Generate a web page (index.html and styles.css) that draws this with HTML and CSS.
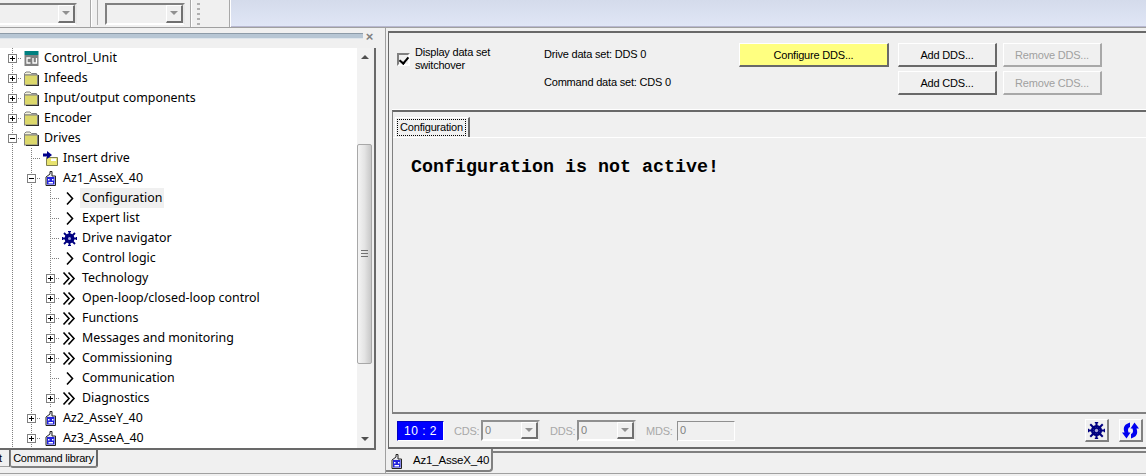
FILE: index.html
```html
<!DOCTYPE html>
<html lang="en">
<head>
    <meta charset="UTF-8">
    <title>Drive configuration</title>
    <link rel="stylesheet" href="styles.css">
</head>
<body>
    <svg class="icon-defs" width="0" height="0">
        <symbol id="i-folder" viewBox="0 0 15 15">
            <path d="M0.5 4 V2.5 L2 1 H6 L7.5 2.5 H12.5 V4 Z" fill="#f4f4dc" stroke="#808080"/>
            <rect x="0.5" y="4" width="13" height="10" fill="#dcd86c" stroke="#808080"/>
            <path d="M14 4 H15 V15 H2 V14 H14 Z" fill="#303030"/>
        </symbol>
        <symbol id="i-cu" viewBox="0 0 15 15">
            <rect x="0.5" y="0" width="14" height="4" fill="#008080"/>
            <rect x="0.5" y="4" width="14" height="11" fill="#808080"/>
            <path d="M6.5 7 H3 V12 H6.5 M9 7 V12 H12.5 V7" fill="none" stroke="#fff" stroke-width="1.3"/>
        </symbol>
        <symbol id="i-insert" viewBox="0 0 15 15">
            <path d="M3.5 6.5 H14.5 V14.5 H3.5 Z" fill="#e8e36e" stroke="#808050"/>
            <path d="M8 7.5 H13 V10 H8 Z" fill="#fff"/>
            <path d="M0 2.5 H4 V0 L9 4 L4 8 V5.5 H0 Z" fill="#00008b"/>
        </symbol>
        <symbol id="i-drive" viewBox="0 0 15 15">
            <path d="M3 14.5 V6 L7 3 V0.5 H9 V5 H12.5 V14.5 Z" fill="#e8e8f0" stroke="#222"/>
            <rect x="4" y="6" width="7.5" height="7.5" fill="#2222dd"/>
            <path d="M5 8 H6.5 V9.5 H5 Z M9 8 H10.5 V9.5 H9 Z M5.5 11 H10 V12.5 H5.5 Z" fill="#fff"/>
        </symbol>
        <symbol id="i-one" viewBox="0 0 15 15">
            <path d="M5 1.5 L10.5 7.5 L5 13.5" fill="none" stroke="#000" stroke-width="1.6"/>
        </symbol>
        <symbol id="i-two" viewBox="0 0 15 15">
            <path d="M1.5 1.5 L7 7.5 L1.5 13.5 M6.5 1.5 L12 7.5 L6.5 13.5" fill="none" stroke="#000" stroke-width="1.6"/>
        </symbol>
        <symbol id="i-gear" viewBox="0 0 15 15">
            <g stroke="#000080" fill="none">
                <circle cx="7.5" cy="7.5" r="3.8" stroke-width="2.2"/>
                <path d="M7.5 0 V15 M0 7.5 H15 M2 2 L13 13 M13 2 L2 13" stroke-width="1.8"/>
            </g>
            <path d="M6 0.5 H9 M6 14.5 H9 M0.5 6 V9 M14.5 6 V9" stroke="#000080"/>
            <circle cx="7.5" cy="7.5" r="1.5" fill="#a8a8d8"/>
        </symbol>
        <symbol id="i-sync" viewBox="0 0 17 17">
            <path d="M8 0.5 C3 2 0.5 5 2.5 10.5 L0 10.5 L4.5 16.5 L8.5 10.5 L6.5 10.5 C5.5 7.5 6 6 8 5 Z" fill="#0000f0"/>
            <path d="M9 16.5 C14 15 16.5 12 14.5 6.5 L17 6.5 L12.5 0.5 L8.5 6.5 L10.5 6.5 C11.5 9.5 11 11 9 12 Z" fill="#0000f0"/>
        </symbol>
    </svg>

    <div class="toolbar">
        <div class="combo combo-first"><span class="combo-arrow"></span></div>
        <div class="tool-sep"></div>
        <div class="tool-edge"></div>
        <div class="combo combo-second"><span class="combo-arrow"></span></div>
        <div class="tool-sep tool-sep-two"></div>
        <div class="grip"></div>
        <div class="tool-sep tool-sep-three"></div>
        <div class="toolbar-fill"></div>
    </div>

    <div class="workspace">
        <div class="left-pane">
            <div class="pane-title">
                <div class="pane-stripe"></div>
                <span class="pane-close">&#215;</span>
            </div>
            <div class="tree-box">
                <div class="tree">
                    <div class="row"><span class="tee"><i class="plus"></i></span><svg class="ico"><use href="#i-cu"/></svg><span class="label">Control_Unit</span></div>
                    <div class="row"><span class="tee"><i class="plus"></i></span><svg class="ico"><use href="#i-folder"/></svg><span class="label">Infeeds</span></div>
                    <div class="row"><span class="tee"><i class="plus"></i></span><svg class="ico"><use href="#i-folder"/></svg><span class="label">Input/output components</span></div>
                    <div class="row"><span class="tee"><i class="plus"></i></span><svg class="ico"><use href="#i-folder"/></svg><span class="label">Encoder</span></div>
                    <div class="row"><span class="tee"><i class="minus"></i></span><svg class="ico"><use href="#i-folder"/></svg><span class="label">Drives</span></div>
                    <div class="row"><span class="guide"></span><span class="tee"></span><svg class="ico"><use href="#i-insert"/></svg><span class="label">Insert drive</span></div>
                    <div class="row"><span class="guide"></span><span class="tee"><i class="minus"></i></span><svg class="ico"><use href="#i-drive"/></svg><span class="label">Az1_AsseX_40</span></div>
                    <div class="row"><span class="guide"></span><span class="guide"></span><span class="tee"></span><svg class="ico"><use href="#i-one"/></svg><span class="label selected">Configuration</span></div>
                    <div class="row"><span class="guide"></span><span class="guide"></span><span class="tee"></span><svg class="ico"><use href="#i-one"/></svg><span class="label">Expert list</span></div>
                    <div class="row"><span class="guide"></span><span class="guide"></span><span class="tee"></span><svg class="ico"><use href="#i-gear"/></svg><span class="label">Drive navigator</span></div>
                    <div class="row"><span class="guide"></span><span class="guide"></span><span class="tee"></span><svg class="ico"><use href="#i-one"/></svg><span class="label">Control logic</span></div>
                    <div class="row"><span class="guide"></span><span class="guide"></span><span class="tee"><i class="plus"></i></span><svg class="ico"><use href="#i-two"/></svg><span class="label">Technology</span></div>
                    <div class="row"><span class="guide"></span><span class="guide"></span><span class="tee"><i class="plus"></i></span><svg class="ico"><use href="#i-two"/></svg><span class="label">Open-loop/closed-loop control</span></div>
                    <div class="row"><span class="guide"></span><span class="guide"></span><span class="tee"><i class="plus"></i></span><svg class="ico"><use href="#i-two"/></svg><span class="label">Functions</span></div>
                    <div class="row"><span class="guide"></span><span class="guide"></span><span class="tee"><i class="plus"></i></span><svg class="ico"><use href="#i-two"/></svg><span class="label">Messages and monitoring</span></div>
                    <div class="row"><span class="guide"></span><span class="guide"></span><span class="tee"><i class="plus"></i></span><svg class="ico"><use href="#i-two"/></svg><span class="label">Commissioning</span></div>
                    <div class="row"><span class="guide"></span><span class="guide"></span><span class="tee"></span><svg class="ico"><use href="#i-one"/></svg><span class="label">Communication</span></div>
                    <div class="row"><span class="guide"></span><span class="guide"></span><span class="tee"><i class="plus"></i></span><svg class="ico"><use href="#i-two"/></svg><span class="label">Diagnostics</span></div>
                    <div class="row"><span class="guide"></span><span class="tee"><i class="plus"></i></span><svg class="ico"><use href="#i-drive"/></svg><span class="label">Az2_AsseY_40</span></div>
                    <div class="row"><span class="guide"></span><span class="tee"><i class="plus"></i></span><svg class="ico"><use href="#i-drive"/></svg><span class="label">Az3_AsseA_40</span></div>
                </div>
                <div class="scrollbar">
                    <span class="scroll-up"></span>
                    <div class="scroll-thumb"><span class="thumb-grip"></span></div>
                    <span class="scroll-down"></span>
                </div>
            </div>
            <div class="left-tabs">
                <div class="left-tab-cut"></div>
                <div class="left-tab">Command library</div>
            </div>
        </div>

        <div class="right-pane">
            <div class="right-box">
                <div class="dds-bar">
                    <div class="dds-check">
                        <span class="checkbox"></span>
                        <span class="check-text">Display data set switchover</span>
                    </div>
                    <div class="dds-line">Drive data set: DDS 0</div>
                    <button class="btn btn-yellow">Configure DDS...</button>
                    <button class="btn btn-add">Add DDS...</button>
                    <button class="btn btn-remove" disabled>Remove DDS...</button>
                    <div class="dds-line dds-line-two">Command data set: CDS 0</div>
                    <button class="btn btn-add btn-row-two">Add CDS...</button>
                    <button class="btn btn-remove btn-row-two" disabled>Remove CDS...</button>
                </div>
                <div class="config-area">
                    <div class="config-tabs"><div class="config-tab"><span class="config-focus">Configuration</span></div></div>
                    <div class="config-body">Configuration is not active!</div>
                </div>
                <div class="status-bar">
                    <div class="status-time">10 : 2</div>
                    <span class="status-label">CDS:</span>
                    <div class="status-combo"><span class="status-val">0</span><span class="combo-arrow"></span></div>
                    <span class="status-label">DDS:</span>
                    <div class="status-combo"><span class="status-val">0</span><span class="combo-arrow"></span></div>
                    <span class="status-label">MDS:</span>
                    <div class="status-field">0</div>
                    <button class="icon-btn icon-btn-gear"><svg class="btn-ico"><use href="#i-gear"/></svg></button>
                    <button class="icon-btn"><svg class="btn-ico"><use href="#i-sync"/></svg></button>
                </div>
            </div>
            <div class="doc-tabs">
                <div class="doc-tab"><svg class="doc-ico"><use href="#i-drive"/></svg>Az1_AsseX_40</div>
                <div class="doc-rest"></div>
            </div>
        </div>
    </div>
</body>
</html>
```

FILE: styles.css
```css
* {
    margin: 0;
    padding: 0;
    box-sizing: border-box;
}

html, body {
    height: 476px;
    overflow: hidden;
}

body {
    background-color: #f0f0f0;
    font-family: "Liberation Sans", Arial, sans-serif;
    font-size: 11px;
    letter-spacing: -0.2px;
    color: #000;
    display: flex;
    flex-direction: column;
}

.icon-defs {
    position: absolute;
}

/* top toolbar */

.toolbar {
    height: 28px;
    display: flex;
    border-bottom: 1px solid #a0a0a0;
    flex: none;
}

.combo {
    height: 22px;
    margin-top: 3px;
    border: 2px solid #808080;
    border-right-color: #e8e8e8;
    border-bottom-color: #fff;
    display: flex;
    justify-content: flex-end;
    align-items: stretch;
}

.combo-first {
    width: 78px;
    margin-left: -1px;
    border-left: none;
}

.combo-second {
    width: 80px;
    margin-left: 7px;
}

.combo-arrow {
    width: 17px;
    background-color: #f0f0f0;
    border: 1px solid #fff;
    border-right: 2px solid #707070;
    border-bottom: 2px solid #707070;
    position: relative;
}

.combo-arrow::after {
    content: "";
    position: absolute;
    left: 3px;
    top: 5px;
    border-left: 4px solid transparent;
    border-right: 4px solid transparent;
    border-top: 4px solid #909090;
}

.tool-sep {
    width: 2px;
    margin-left: 13px;
    background-color: #a8a8a8;
    border-right: 1px solid #fff;
}

.tool-edge {
    width: 1px;
    height: 25px;
    margin-left: 5px;
    background-color: #b0b0b0;
}

.tool-sep-two {
    margin-left: 5px;
}

.tool-sep-three {
    margin-left: 29px;
}

.grip {
    width: 3px;
    height: 22px;
    margin: 3px 0 0 5px;
    background-image: repeating-linear-gradient(#b0b0b0 0 2px, transparent 2px 5px);
}

.toolbar-fill {
    flex: 1;
    background: linear-gradient(#d4dbeb, #e0e6f6);
    border-bottom: 1px solid #b8b8d0;
}

/* workspace */

.workspace {
    display: flex;
    height: 446px;
    flex: none;
    border-bottom: 1px solid #a0a0a0;
}

.left-pane {
    width: 376px;
    flex: none;
    display: flex;
    flex-direction: column;
}

.pane-title {
    height: 20px;
    display: flex;
    align-items: center;
    flex: none;
}

.pane-stripe {
    width: 363px;
    height: 6px;
    margin-top: -4px;
    background-color: #b7c6d4;
    border-top: 1px solid #8d9ba8;
    border-bottom: 1px solid #dfe6ec;
}

.pane-close {
    width: 13px;
    margin-top: -4px;
    text-align: center;
    color: #808080;
    font-size: 13px;
    font-weight: bold;
}

.tree-box {
    height: 402px;
    display: flex;
    border-right: 2px solid #696969;
    border-bottom: 2px solid #696969;
    flex: none;
}

.tree {
    width: 357px;
    height: 400px;
    overflow: hidden;
    background-color: #fff;
    padding-left: 3px;
    font-family: "Noto Sans", Tahoma, sans-serif;
    font-size: 12.4px;
    letter-spacing: 0;
}

.row {
    height: 20px;
    display: flex;
    align-items: center;
    white-space: nowrap;
}

.guide,
.tee {
    width: 19px;
    height: 20px;
    flex: none;
    background-repeat: no-repeat;
}

.guide {
    background-image: repeating-linear-gradient(#808080 0 1px, transparent 1px 2px);
    background-size: 1px 100%;
    background-position: 9px 0;
}

.tee {
    background-image:
        repeating-linear-gradient(#808080 0 1px, transparent 1px 2px),
        repeating-linear-gradient(90deg, #808080 0 1px, transparent 1px 2px);
    background-size: 1px 100%, 10px 1px;
    background-position: 9px 0, 9px 10px;
}

.plus,
.minus {
    display: block;
    width: 9px;
    height: 9px;
    margin: 6px 0 0 5px;
    border: 1px solid #808080;
    background-color: #fff;
    background-repeat: no-repeat;
}

.plus {
    background-image: linear-gradient(#000, #000), linear-gradient(#000, #000);
    background-size: 5px 1px, 1px 5px;
    background-position: 1px 3px, 3px 1px;
}

.minus {
    background-image: linear-gradient(#000, #000);
    background-size: 5px 1px;
    background-position: 1px 3px;
}

.ico {
    width: 15px;
    height: 15px;
    margin: 0 5px 0 2px;
    flex: none;
}

.label {
    height: 20px;
    line-height: 20px;
    color: #000;
}

.selected {
    background-color: #f0f0f0;
    padding: 0 2px;
    margin-left: -2px;
}

.scrollbar {
    width: 15px;
    height: 400px;
    position: relative;
    flex: none;
    background-color: #f2f2f2;
}

.scroll-up,
.scroll-down {
    position: absolute;
    left: 4px;
    border-left: 4px solid transparent;
    border-right: 4px solid transparent;
}

.scroll-up {
    top: 7px;
    border-bottom: 4px solid #505050;
}

.scroll-down {
    bottom: 7px;
    border-top: 4px solid #505050;
}

.scroll-thumb {
    position: absolute;
    top: 96px;
    left: 0;
    width: 15px;
    height: 220px;
    background: linear-gradient(90deg, #f4f4f4, #e4e4e4 50%, #c8c8c8);
    border: 1px solid #a8a8a8;
    border-radius: 2px;
}

.thumb-grip {
    position: absolute;
    top: 105px;
    left: 3px;
    width: 7px;
    height: 8px;
    background-image: repeating-linear-gradient(#707070 0 1px, transparent 1px 3px);
}

.left-tabs {
    display: flex;
    align-items: flex-start;
    flex: none;
}

.left-tab-cut {
    width: 10px;
    height: 17px;
    border-right: 1px solid #696969;
    border-bottom: 1px solid #a0a0a0;
}

.left-tab-cut::before {
    content: "t";
    display: block;
    margin-left: -1px;
    line-height: 16px;
}

.left-tab {
    width: 88px;
    height: 18px;
    line-height: 16px;
    text-align: center;
    white-space: nowrap;
    background-color: #f0f0f0;
    border: 1px solid #808080;
    border-top: none;
    border-right: 2px solid #696969;
    border-bottom: 2px solid #808080;
    border-radius: 0 0 3px 3px;
}

/* right side */

.right-pane {
    flex: 1;
    min-width: 0;
    margin-left: 9px;
    border-left: 1px solid #a0a0a0;
    display: flex;
    flex-direction: column;
}

.right-box {
    height: 418px;
    margin: 3px 0 0 2px;
    border-top: 2px solid #696969;
    border-left: 1px solid #696969;
    border-bottom: 2px solid #696969;
    display: flex;
    flex-direction: column;
    flex: none;
}

.dds-bar {
    height: 77px;
    flex: none;
    padding: 10px 0 0 8px;
    display: grid;
    grid-template-columns: 147px 195px 159px 105px 99px;
    grid-template-rows: 24px 24px;
    row-gap: 4px;
}

.dds-check {
    display: flex;
    align-items: flex-start;
    grid-row: 1 / 3;
    padding-top: 3px;
}

.checkbox {
    width: 13px;
    height: 13px;
    margin-top: 7px;
    flex: none;
    background-color: #f0f0f0;
    border: 2px solid #808080;
    border-right-color: #fff;
    border-bottom-color: #fff;
    position: relative;
}

.checkbox::after {
    content: "";
    position: absolute;
    left: 2px;
    top: 0;
    width: 4px;
    height: 7px;
    border-right: 2px solid #000;
    border-bottom: 2px solid #000;
    transform: rotate(40deg);
}

.check-text {
    width: 90px;
    margin-left: 5px;
    line-height: 13px;
}

.dds-line {
    line-height: 22px;
    white-space: nowrap;
}

.dds-line-two {
    grid-column: 2;
    grid-row: 2;
}

.btn {
    height: 24px;
    background-color: #f0f0f0;
    border: 1px solid #fff;
    border-right: 2px solid #696969;
    border-bottom: 2px solid #696969;
    font-family: "Liberation Sans", Arial, sans-serif;
    font-size: 11px;
    letter-spacing: -0.2px;
    color: #000;
}

.btn-yellow {
    background-color: #ffff80;
    width: 150px;
}

.btn-add {
    width: 99px;
    grid-column: 4;
}

.btn-remove {
    width: 99px;
    grid-column: 5;
    color: #a0a0a0;
    border-right-color: #a8a8a8;
    border-bottom-color: #a8a8a8;
}

.btn-row-two {
    grid-row: 2;
}

.config-area {
    flex: 1;
    min-height: 0;
    margin-left: 3px;
    border-top: 2px solid #696969;
    border-bottom: 2px solid #808080;
    border-left: 1px solid #808080;
    box-shadow: 0 -1px 0 #fff;
    display: flex;
    flex-direction: column;
}

.config-tabs {
    height: 26px;
    flex: none;
    padding: 5px 0 0 2px;
    border-bottom: 1px solid #fff;
}

.config-tab {
    width: 75px;
    height: 20px;
    padding: 1px 2px 2px 1px;
    background-color: #f0f0f0;
    border-top: 1px solid #fff;
    border-left: 1px solid #fff;
    border-right: 2px solid #696969;
}

.config-focus {
    display: block;
    height: 17px;
    line-height: 15px;
    text-align: center;
    border: 1px dotted #000;
}

.config-body {
    padding: 19px 0 0 18px;
    font-family: "Liberation Mono", "Courier New", monospace;
    font-size: 18.33px;
    font-weight: bold;
    letter-spacing: 0;
    line-height: 22px;
}

.status-bar {
    height: 33px;
    flex: none;
    display: flex;
    align-items: center;
    padding: 0 3px 0 8px;
}

.status-time {
    width: 47px;
    height: 20px;
    line-height: 19px;
    text-align: center;
    color: #fff;
    font-size: 12px;
    background-color: #0000ff;
    border: 1px solid #0000c0;
    border-right-color: #fff;
    border-bottom-color: #fff;
    letter-spacing: 0.5px;
}

.status-label {
    width: 27px;
    margin-left: 10px;
    color: #a8a8a8;
    white-space: nowrap;
}

.status-combo {
    width: 59px;
    height: 21px;
    display: flex;
    justify-content: space-between;
    border: 2px solid #909090;
    border-right-color: #e8e8e8;
    border-bottom-color: #fff;
    color: #808080;
}

.status-val {
    line-height: 17px;
    padding-left: 2px;
}

.status-field {
    width: 58px;
    height: 20px;
    margin-left: 4px;
    line-height: 17px;
    padding-left: 2px;
    border: 1px solid #909090;
    border-right-color: #fff;
    border-bottom-color: #fff;
    color: #808080;
}

.icon-btn {
    width: 24px;
    height: 23px;
    margin-left: 10px;
    background-color: #f0f0f0;
    border: 1px solid #fff;
    border-right: 2px solid #808080;
    border-bottom: 2px solid #808080;
    display: flex;
    align-items: center;
    justify-content: center;
}

.icon-btn-gear {
    margin-left: auto;
}

.btn-ico {
    width: 17px;
    height: 17px;
}

.doc-tabs {
    flex: 1;
    min-height: 0;
    display: flex;
}

.doc-tab {
    width: 107px;
    height: 23px;
    padding-left: 3px;
    display: flex;
    align-items: center;
    white-space: nowrap;
    background-color: #f0f0f0;
    border-right: 2px solid #808080;
    border-bottom: 2px solid #808080;
    border-radius: 0 0 4px 0;
    font-size: 11.5px;
}

.doc-ico {
    width: 15px;
    height: 15px;
    margin-right: 9px;
    margin-top: 3px;
    flex: none;
}

.doc-rest {
    flex: 1;
    height: 2px;
    margin-top: 2px;
    background-color: #808080;
}
```
